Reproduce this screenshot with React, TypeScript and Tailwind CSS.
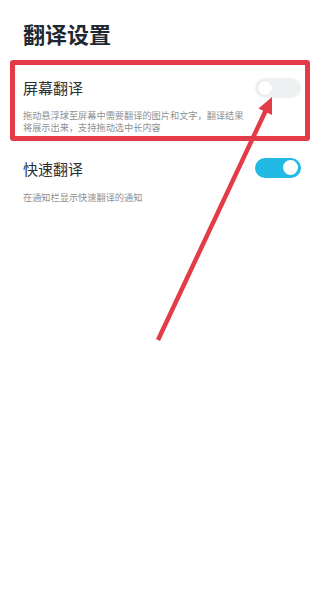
import React from "react";

function Toggle({ on }: { on: boolean }) {
  return on ? (
    <div className="w-[46px] h-[20px] rounded-full bg-[#22b9e4] flex items-center justify-end pr-[3px]">
      <div className="w-[15px] h-[15px] rounded-full bg-white" />
    </div>
  ) : (
    <div className="w-[46px] h-[20px] rounded-full bg-[#eef1f1] flex items-center justify-start pl-[2px]">
      <div className="w-[16px] h-[16px] rounded-full bg-white border border-[#e6e9e9]" />
    </div>
  );
}

export default function App() {
  return (
    <div
      className="relative w-[322px] h-[605px] bg-white overflow-hidden"
      style={{ fontFamily: '"Noto Sans CJK SC", "Noto Sans", sans-serif' }}
    >
      <div className="pl-[23px] pr-[21px]">
        <div className="pt-[19px] text-[22px] leading-[28px] font-bold text-[#1d2731]">
          翻译设置
        </div>

        <div className="mt-[30px] flex items-center justify-between h-[22px]">
          <span className="text-[15px] leading-[22px] text-[#2b2f33]">屏幕翻译</span>
          <Toggle on={false} />
        </div>
        <div className="mt-[10px] w-[224px] text-[9.2px] leading-[12px] text-[#8e9193]">
          拖动悬浮球至屏幕中需要翻译的图片和文字，翻译结果将展示出来，支持拖动选中长内容
        </div>

        <div className="mt-[25px] flex items-center justify-between h-[22px]">
          <span className="text-[15px] leading-[22px] text-[#2b2f33]">快速翻译</span>
          <div className="-mt-[3px]">
            <Toggle on={true} />
          </div>
        </div>
        <div className="mt-[11px] text-[9.2px] leading-[12px] text-[#8e9193]">
          在通知栏显示快速翻译的通知
        </div>
      </div>

      {/* annotation: red box */}
      <div className="absolute left-[10px] top-[60px] w-[300px] h-[81px] border-[5px] border-[#e33b48] rounded-[3px] pointer-events-none" />

      {/* annotation: arrow */}
      <svg
        className="absolute left-0 top-0 pointer-events-none"
        width="322"
        height="605"
        viewBox="0 0 322 605"
      >
        <line x1="158" y1="340" x2="266" y2="110" stroke="#e33b48" strokeWidth="4.5" />
        <polygon points="272,97 258.5,108.5 272,115" fill="#e33b48" />
      </svg>
    </div>
  );
}
